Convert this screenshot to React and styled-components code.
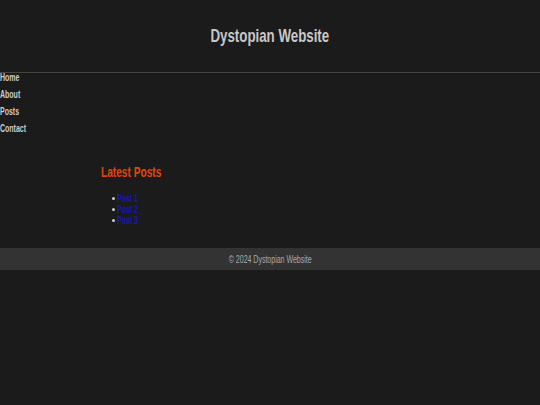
import styled, { createGlobalStyle } from 'styled-components';

const GlobalStyle = createGlobalStyle`
    html, body {
        margin: 0;
        padding: 0;
        background-color: #1b1b1b;
        font-family: 'Liberation Sans', Arial, sans-serif;
    }
`;

const posts = ['Post 1', 'Post 2', 'Post 3'];
const navItems = ['Home', 'About', 'Posts', 'Contact'];

const App = () => {
    return (
        <Page>
            <GlobalStyle />
            <Header>
                <Title>
                    <Narrow $origin="center">Dystopian Website</Narrow>
                </Title>
            </Header>
            <Nav>
                {navItems.map((item) => (
                    <NavItem key={item}>
                        <Narrow>{item}</Narrow>
                    </NavItem>
                ))}
            </Nav>
            <Main>
                <SectionTitle>
                    <Narrow>Latest Posts</Narrow>
                </SectionTitle>
                <PostList>
                    {posts.map((post) => (
                        <PostItem key={post}>
                            <PostLink href="#">
                                <Narrow>{post}</Narrow>
                            </PostLink>
                        </PostItem>
                    ))}
                </PostList>
            </Main>
            <Footer>
                <Narrow $origin="center">© 2024 Dystopian Website</Narrow>
            </Footer>
        </Page>
    );
};

export default App;

const Page = styled.div`
    width: 100%;
    min-height: 100vh;
    background-color: #1b1b1b;
    color: #cccccc;
`;

// the page font is a narrow sans, squeeze the regular one
const Narrow = styled.span`
    display: inline-block;
    white-space: nowrap;
    transform: scaleX(0.7);
    transform-origin: ${({ $origin }) => $origin || 'left'} center;
`;

const Header = styled.header`
    height: 72px;
    display: flex;
    align-items: center;
    justify-content: center;
    border-bottom: 1px solid #444444;
`;

const Title = styled.h1`
    margin: 0;
    font-size: 19px;
    font-weight: 700;
    color: #c8c8c8;
`;

const Nav = styled.ul`
    list-style: none;
    margin: 0;
    padding: 0;
    display: flex;
    flex-direction: column;
`;

const NavItem = styled.li`
    height: 17px;
    line-height: 10px;
    font-size: 10px;
    font-weight: 700;
    color: #cccccc;
`;

const Main = styled.main`
    padding: 23px 101px 22px;
`;

const SectionTitle = styled.h2`
    margin: 0 0 13px;
    font-size: 14.5px;
    font-weight: 700;
    color: #e0470e;
`;

const PostList = styled.ul`
    list-style: none;
    margin: 0;
    padding-left: 16px;
    font-size: 10px;
    line-height: 11px;
`;

const PostItem = styled.li`
    position: relative;

    &::before {
        content: '';
        position: absolute;
        left: -5px;
        top: 4px;
        width: 3px;
        height: 3px;
        border-radius: 50%;
        background-color: #cccccc;
    }
`;

const PostLink = styled.a`
    color: #1a1aa8;
    font-weight: 700;
`;

const Footer = styled.footer`
    height: 22px;
    display: flex;
    align-items: center;
    justify-content: center;
    background-color: #333333;
    color: #aaaaaa;
    font-size: 10px;
`;
